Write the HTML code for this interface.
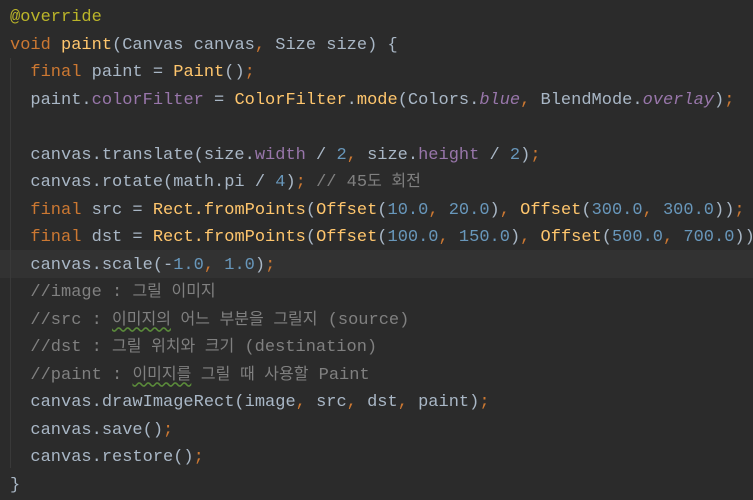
<!DOCTYPE html>
<html><head><meta charset="utf-8"><style>
html,body{margin:0;padding:0;background:#2b2b2b;width:753px;height:500px;overflow:hidden}
pre{margin:0;position:absolute;left:10px;top:4px;font-family:"Liberation Mono","Noto Sans CJK KR",monospace;font-size:17px;line-height:27.5px;color:#a9b7c6;white-space:pre}
.k{color:#cc7832}.f{color:#ffc66d}.n{color:#6897bb}.c{color:#808080}.a{color:#bbb529}.p{color:#9876aa}.i{color:#9876aa;font-style:italic}
.h{position:absolute;left:0;width:753px;top:250px;height:27.5px;background:#323232}
.g{position:absolute;left:10px;top:58px;width:1px;height:410px;background:#393939}
.ko{font-size:16px}
.w{text-decoration:underline wavy #5a8a3a;text-underline-offset:3px}
</style></head><body>
<div class="h"></div><div class="g"></div>
<pre><span class="a">@override</span>
<span class="k">void </span><span class="f">paint</span>(Canvas canvas<span class="k">, </span>Size size) {
  <span class="k">final </span>paint = <span class="f">Paint</span>()<span class="k">;</span>
  paint.<span class="p">colorFilter</span> = <span class="f">ColorFilter</span>.<span class="f">mode</span>(Colors.<span class="i">blue</span><span class="k">, </span>BlendMode.<span class="i">overlay</span>)<span class="k">;</span>

  canvas.translate(size.<span class="p">width</span> / <span class="n">2</span><span class="k">, </span>size.<span class="p">height</span> / <span class="n">2</span>)<span class="k">;</span>
  canvas.rotate(math.pi / <span class="n">4</span>)<span class="k">; </span><span class="c">// 45<span class="ko">도 회전</span></span>
  <span class="k">final </span>src = <span class="f">Rect.fromPoints</span>(<span class="f">Offset</span>(<span class="n">10.0</span><span class="k">, </span><span class="n">20.0</span>)<span class="k">, </span><span class="f">Offset</span>(<span class="n">300.0</span><span class="k">, </span><span class="n">300.0</span>))<span class="k">;</span>
  <span class="k">final </span>dst = <span class="f">Rect.fromPoints</span>(<span class="f">Offset</span>(<span class="n">100.0</span><span class="k">, </span><span class="n">150.0</span>)<span class="k">, </span><span class="f">Offset</span>(<span class="n">500.0</span><span class="k">, </span><span class="n">700.0</span>))<span class="k">;</span>
  canvas.scale(-<span class="n">1.0</span><span class="k">, </span><span class="n">1.0</span>)<span class="k">;</span>
  <span class="c">//image : <span class="ko">그릴 이미지</span></span>
  <span class="c">//src : <span class="ko"><span class="w">이미지의</span> 어느 부분을 그릴지</span> (source)</span>
  <span class="c">//dst : <span class="ko">그릴 위치와 크기</span> (destination)</span>
  <span class="c">//paint : <span class="ko"><span class="w">이미지를</span> 그릴 때 사용할</span> Paint</span>
  canvas.drawImageRect(image<span class="k">, </span>src<span class="k">, </span>dst<span class="k">, </span>paint)<span class="k">;</span>
  canvas.save()<span class="k">;</span>
  canvas.restore()<span class="k">;</span>
}</pre>
</body></html>
